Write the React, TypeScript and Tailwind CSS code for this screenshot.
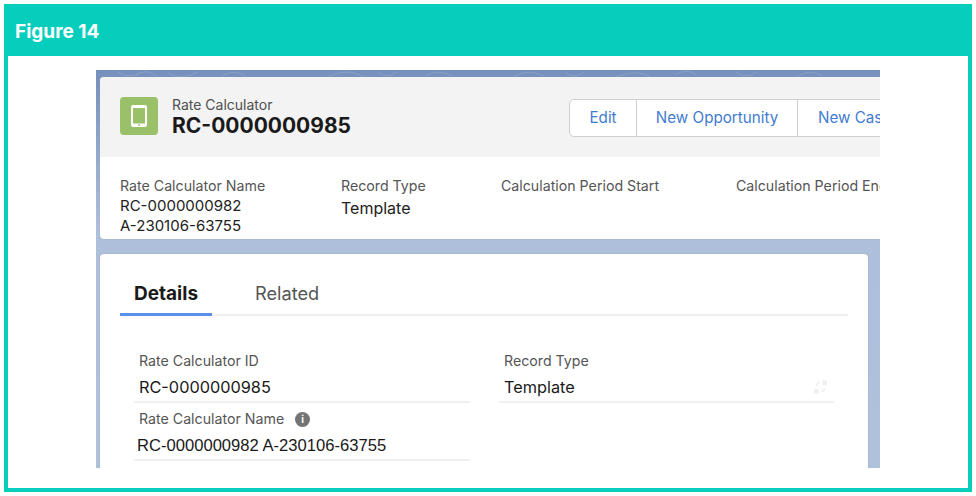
import React from "react";

const sf = "font-['Inter','Liberation_Sans',sans-serif]";

function App() {
  return (
    <div className="w-[976px] h-[496px] bg-white p-1 overflow-hidden">
      <div className="w-[968px] h-[488px] border-4 border-t-0 border-[#07cebc] flex flex-col">
        <div className="h-[52px] -mx-1 bg-[#07cebc] shrink-0 flex items-center pl-[11px] pt-[3px]">
          <span className="font-['Inter',sans-serif] font-bold text-[19px] text-white leading-none">Figure 14</span>
        </div>
        <div className="flex-1 pt-[14px] pl-[88px]">
          <Shot />
        </div>
      </div>
    </div>
  );
}

function Shot() {
  return (
    <div className={`${sf} w-[784px] h-[398px] overflow-hidden bg-gradient-to-b from-[#7590bc] via-[#aebfdb] via-40% to-[#b0c1dc] flex flex-col pl-1 pt-[7px] relative`}>
      <svg className="absolute left-0 top-0" width="784" height="8" fill="none" stroke="#8aa2c8" strokeWidth="1">
        <path d="M22 2c8 5 16 5 22 0M40 6c6-6 14-5 20 0M72 3c10 6 20 4 30-1M126 6c8-5 18-5 24 1M232 7c14-7 26-6 36 0M282 2c6 5 14 5 18 0M330 6c10-6 18-4 26 0M418 7c8-6 20-6 30-1M470 3c6 4 12 4 18-1M520 7c14-5 24-6 34 0M580 5c6-5 14-5 20 0M640 2c8 5 14 5 20 0M700 7c10-6 18-6 26-1" />
      </svg>
      <div className="relative w-[860px] h-[162px] shrink-0 bg-white rounded-[4px] overflow-hidden shadow-[0_0_1px_#8a9ab5]">
        <div className="h-[80px] bg-[#f3f3f3] flex pl-5 relative">
          <div className="mt-5 w-[38px] h-[38px] rounded-[4px] bg-[#9bc06a] flex items-center justify-center">
            <svg width="18" height="24" viewBox="0 0 18 24">
              <path fillRule="evenodd" fill="#fff" d="M3 1h12a2 2 0 0 1 2 2v18a2 2 0 0 1-2 2H3a2 2 0 0 1-2-2V3a2 2 0 0 1 2-2zm0 3v15.500h12V4z" />
              <circle cx="9" cy="21.200" r="0.900" fill="#9bc06a" />
            </svg>
          </div>
          <div className="ml-[14px] mt-[19px]">
            <div className="text-[14px] leading-[17px] text-[#4f4f4f]">Rate Calculator</div>
            <div className="text-[21px] leading-[25px] font-bold text-[#1a1a1a]">RC-0000000985</div>
          </div>
          <div className="absolute left-[469px] top-[22px] h-[38px] flex bg-white border border-[#cfcfcf] rounded-[5px] text-[15.200px] text-[#3f7ccf]">
            <div className="w-[67px] pt-[1px] flex items-center justify-center border-r border-[#cfcfcf]">Edit</div>
            <div className="w-[161px] pt-[1px] flex items-center justify-center border-r border-[#cfcfcf]">New Opportunity</div>
            <div className="w-[140px] pl-5 pt-[1px] flex items-center">New Case</div>
          </div>
        </div>
        <div className="relative flex pl-5 pt-5 text-[14.200px] leading-[17px] text-[#555]">
          <div className="w-[221px]">
            <div>Rate Calculator Name</div>
            <div className="text-[15px] leading-[20px] text-[#222] mt-[2px]">RC-0000000982<br />A-230106-63755</div>
          </div>
          <div className="w-[160px]">
            <div>Record Type</div>
            <div className="text-[16px] leading-[20px] text-[#222] mt-[4px]">Template</div>
          </div>
          <div className="w-[235px]">Calculation Period Start</div>
          <div className="whitespace-nowrap">Calculation Period End</div>
        </div>
      </div>
      <div className="w-[768px] h-[300px] mt-[15px] shrink-0 bg-white rounded-t-[4px] shadow-[0_0_2px_#9aa5b8] px-5">
        <div className="h-[62px] border-b-2 border-[#f0f0f0] flex items-end relative">
          <div className="w-[92px] h-[62px] -mb-[2px] border-b-[3px] border-[#5b8fe6] flex items-center justify-center pt-[21px] text-[19px] font-bold text-[#1a1a1a]">Details</div>
          <div className="ml-[43px] h-[62px] flex items-center pt-[22px] text-[18.200px] text-[#555]">Related</div>
        </div>
        <div className="flex pt-[36px]">
          <div className="w-[336px] ml-[14px]">
            <Field label="Rate Calculator ID" value="RC-0000000985" />
            <div className="pl-[5px] h-[58px] pt-[7px] border-b-2 border-[#f0f0f0] font-['Liberation_Sans',sans-serif]">
              <div className={`${sf} flex items-center text-[14.200px] leading-[18px] text-[#555]`}>
                Rate Calculator Name
                <span className="ml-[11px] w-[15px] h-[15px] rounded-full bg-[#747474] text-white text-[10px] font-bold flex items-center justify-center leading-none">i</span>
              </div>
              <div className="text-[16.600px] leading-[20px] text-[#1a1a1a] mt-2 -ml-[2px]">RC-0000000982 A-230106-63755</div>
            </div>
          </div>
          <div className="w-[335px] ml-[29px] relative">
            <Field label="Record Type" value="Template" />
            <svg className="absolute right-[6px] top-[27px]" width="15" height="16" viewBox="0 0 16 16" fill="#f0f0f0">
              <path d="M10 1h5v5h-5zM1 10h5v5H1zM3 7c0-3 2-5 5-5l-1 2c-2 0-2 1-2 3zM13 9c0 3-2 5-5 5l1-2c2 0 2-1 2-3z" />
            </svg>
          </div>
        </div>
      </div>
    </div>
  );
}

function Field({ label, value }: { label: string; value: string }) {
  return (
    <div className="pl-[5px] h-[51px] border-b-2 border-[#f0f0f0]">
      <div className="text-[14.200px] leading-[18px] text-[#555]">{label}</div>
      <div className="text-[16.300px] leading-[20px] text-[#1a1a1a] mt-[7px]">{value}</div>
    </div>
  );
}

export default App;
